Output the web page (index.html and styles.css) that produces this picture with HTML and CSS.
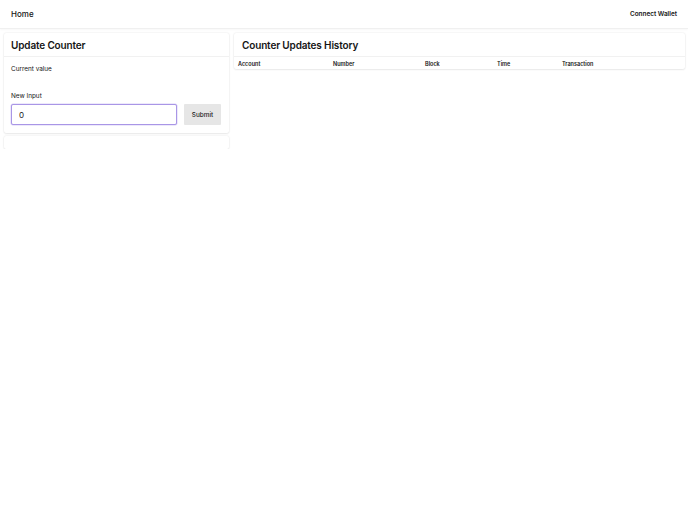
FILE: index.html
```html
<!DOCTYPE html>
<html>
<head>
<meta charset="utf-8">
<link rel="stylesheet" href="styles.css">
</head>
<body>
<header class="topbar">
  <span class="home">Home</span>
  <span class="wallet">Connect Wallet</span>
</header>
<main class="layout">
  <section class="col-left">
    <div class="card">
      <div class="card-head"><h2>Update Counter</h2></div>
      <div class="card-body">
        <div class="label">Current value</div>
        <div class="value"></div>
        <div class="label">New Input</div>
        <div class="form-row">
          <input class="num-input" type="text" value="0">
          <button class="submit">Submit</button>
        </div>
      </div>
    </div>
    <div class="card empty-card"></div>
  </section>
  <section class="col-right">
    <div class="card">
      <div class="card-head"><h2>Counter Updates History</h2></div>
      <table class="history">
        <thead>
          <tr>
            <th class="c-account">Account</th>
            <th class="c-number">Number</th>
            <th class="c-block">Block</th>
            <th class="c-time">Time</th>
            <th class="c-tx">Transaction</th>
          </tr>
        </thead>
      </table>
    </div>
  </section>
</main>
</body>
</html>
```

FILE: styles.css
```css
* { box-sizing: border-box; }
html, body { margin: 0; padding: 0; background: #fff; }
body {
  font-family: Inter, "Liberation Sans", sans-serif;
  color: #151515;
  width: 688px;
}
.topbar {
  height: 29px;
  display: flex;
  justify-content: space-between;
  align-items: center;
  padding: 0 11px;
  border-bottom: 1px solid #f0f0f0;
  box-shadow: 0 1px 2px rgba(0,0,0,0.03);
}
.home { font-size: 8px; font-weight: 500; }
.wallet { font-size: 6.4px; font-weight: 600; }
.layout {
  display: flex;
  gap: 5px;
  padding: 4px 3px 0 4px;
  align-items: flex-start;
}
.col-left { width: 225px; display: flex; flex-direction: column; gap: 3px; }
.col-right { flex: 1; }
.card {
  background: #fff;
  border-radius: 2px;
  box-shadow: 0 0 2px rgba(0,0,0,0.12), 0 1px 2px rgba(0,0,0,0.06);
}
.card-head {
  height: 24px;
  display: flex;
  align-items: center;
  padding: 0 7px;
  border-bottom: 1px solid #f1f1f1;
}
.col-right .card-head { padding: 0 8px; }
.card-head h2 {
  margin: 0;
  font-size: 10px;
  font-weight: 600;
  letter-spacing: -0.15px;
}
.card-body { padding: 8px 7px 8px 7px; }
.label { font-size: 6.4px; font-weight: 400; line-height: 8px; }
.value { height: 19px; }
.form-row { display: flex; gap: 7px; margin-top: 4px; }
.num-input {
  width: 166px;
  height: 21px;
  border: 1px solid #a996e6;
  border-radius: 2px;
  padding: 0 7px;
  font-family: Inter, "Liberation Sans", sans-serif;
  font-size: 8px;
  color: #222;
  outline: none;
  box-shadow: 0 0 0 0.5px rgba(150,130,230,0.35);
}
.submit {
  width: 37px;
  height: 21px;
  border: none;
  border-radius: 1px;
  background: #e6e6e6;
  font-family: Inter, "Liberation Sans", sans-serif;
  font-size: 6.4px;
  font-weight: 500;
  color: #222;
  padding: 0;
}
.empty-card { height: 13px; }
.history { width: 100%; border-collapse: collapse; }
.history th {
  text-align: left;
  font-size: 5.5px;
  font-weight: 600;
  height: 12px;
  padding: 1px 0 0 4px;
}
.c-account { width: 95px; }
.c-number { width: 92px; }
.c-block { width: 72px; }
.c-time { width: 65px; }
```
